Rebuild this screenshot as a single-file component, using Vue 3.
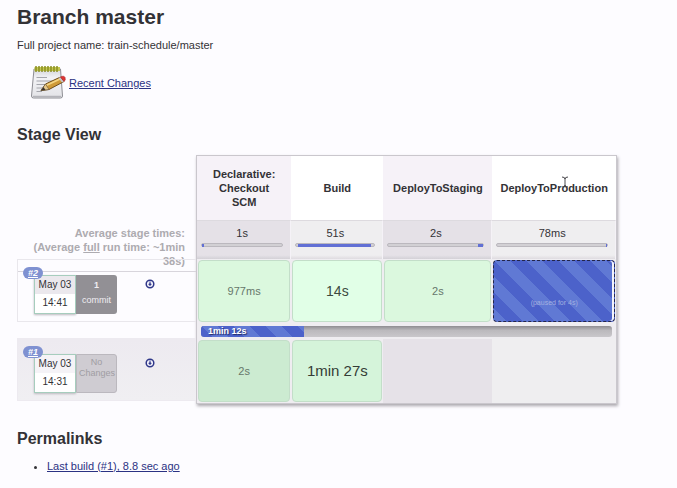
<script setup>
const stages = [
  { name: 'Declarative: Checkout SCM', average: '1s', start: 0, share: 3 },
  { name: 'Build', average: '51s', start: 2, share: 93 },
  { name: 'DeployToStaging', average: '2s', start: 94, share: 6 },
  { name: 'DeployToProduction', average: '78ms', start: 99, share: 1 },
]

const runs = [
  {
    id: 2,
    date: 'May 03',
    time: '14:41',
    changes: ['1', 'commit'],
    cells: [
      { text: '977ms', kind: 'ok' },
      { text: '14s', kind: 'ok mid' },
      { text: '2s', kind: 'ok' },
      { text: '(paused for 4s)', kind: 'paused' },
    ],
    progress: { text: '1min 12s', percent: 25 },
  },
  {
    id: 1,
    date: 'May 03',
    time: '14:31',
    changes: null,
    cells: [
      { text: '2s', kind: 'ok old' },
      { text: '1min 27s', kind: 'ok old long' },
      { text: '', kind: 'empty' },
      { text: '', kind: 'empty' },
    ],
    progress: null,
  },
]
</script>

<template>
  <main class="page">
    <h1>Branch master</h1>
    <p class="project">Full project name: train-schedule/master</p>

    <div class="recent">
      <svg class="notepad" viewBox="0 0 36 36" aria-hidden="true">
        <defs>
          <linearGradient id="paper" x1="0" y1="0" x2="0" y2="1">
            <stop offset="0" stop-color="#d3d4d9" />
            <stop offset="0.3" stop-color="#f2f2f5" />
            <stop offset="1" stop-color="#e3e3e7" />
          </linearGradient>
        </defs>
        <path d="M4 4H30.500L32.500 31Q32.500 33 30.500 33H3.500Q1.500 33 1.500 31Z" fill="url(#paper)" stroke="#8e8e94" />
        <path d="M3 31.500H31" stroke="#b4b4ba" stroke-width="1.500" />
        <path d="M6.500 12.500H17M6.500 16H22M6.500 19.500H16M6.500 23H12M6.500 26.500H12" stroke="#a4a5ac" />
        <path d="M4.500 2H30V6H4.500Z" fill="#c3c650" />
        <path d="M6 1V7M9 1V7M12 1V7M15 1V7M18 1V7M21 1V7M24 1V7M27 1V7" stroke="#8a8e22" stroke-width="1.500" />
        <path d="M11 25.500L15.500 19L30.500 12L34 16.500L19 24.500Z" fill="#cf9a38" stroke="#6f4e1c" />
        <path d="M16.500 20.300L30.500 13.700" stroke="#f4d583" stroke-width="1.800" />
        <path d="M11 25.500L15.500 19L19 24.500Z" fill="#e6c88b" stroke="#65543a" stroke-width="0.600" />
        <path d="M11 25.500L13.500 22L15.500 24.900Z" fill="#38332e" />
        <path d="M28.500 13L30.500 12L34 16.500L32 17.600Z" fill="#c6c7cc" />
        <path d="M30.500 12Q33.800 10.200 35 12.500Q36 14.800 34 16.500Z" fill="#e03432" stroke="#a62428" stroke-width="0.600" />
      </svg>
      <a href="#changes">Recent Changes</a>
    </div>

    <h2>Stage View</h2>
    <section class="stage-view">
      <div class="runs">
        <div class="averages">
          Average stage times:<br />
          (Average <u>full</u> run time: ~1min<br />
          38s)
        </div>
        <div v-for="run in runs" :key="run.id" class="run" :class="{ previous: run.id === 1 }">
          <a class="badge" :href="'#run-' + run.id">#{{ run.id }}</a>
          <div class="card">
            <div class="stamp">
              <span class="date">{{ run.date }}</span>
              <span class="time">{{ run.time }}</span>
            </div>
            <div class="changes" :class="{ none: !run.changes }">
              <template v-if="run.changes"><b>{{ run.changes[0] }}</b><span>{{ run.changes[1] }}</span></template>
              <span v-else>No Changes</span>
            </div>
          </div>
          <a class="download" :href="'#artifacts-' + run.id" aria-label="Artifacts">
            <svg viewBox="0 0 10 10" aria-hidden="true">
              <circle cx="5" cy="5" r="3.800" fill="#f4f3fb" stroke="#2f3789" stroke-width="1.500" />
              <path d="M5 2.500V6M3.800 5L5 6.600L6.200 5Z" fill="#2f3789" stroke="#2f3789" />
            </svg>
          </a>
        </div>
      </div>

      <table>
        <thead>
          <tr class="names">
            <th v-for="stage in stages" :key="stage.name" scope="col">{{ stage.name }}</th>
          </tr>
          <tr class="times">
            <td v-for="stage in stages" :key="stage.name">
              {{ stage.average }}
              <div class="meter">
                <div class="share" :style="{ marginLeft: stage.start + '%', width: stage.share + '%' }"></div>
              </div>
            </td>
          </tr>
        </thead>
        <tbody v-for="run in runs" :key="run.id">
          <tr class="results">
            <td v-for="(cell, i) in run.cells" :key="i">
              <div class="cell" :class="cell.kind">{{ cell.text }}</div>
            </td>
          </tr>
          <tr v-if="run.progress" class="progress-row">
            <td colspan="4">
              <div class="progress">
                <div class="done" :style="{ width: run.progress.percent + '%' }">{{ run.progress.text }}</div>
              </div>
            </td>
          </tr>
        </tbody>
      </table>

      <svg class="pointer" viewBox="0 0 8 12" aria-hidden="true">
        <path d="M1 1Q4 1 4 3Q4 1 7 1M4 2V10M1 11Q4 11 4 9Q4 11 7 11" fill="none" stroke="#4b4a4e" />
      </svg>
    </section>

    <h2>Permalinks</h2>
    <ul>
      <li><a href="#last-build">Last build (#1), 8.8 sec ago</a></li>
    </ul>
  </main>
</template>

<style>
body {
  background: #fdfcff;
}
</style>

<style scoped>
.page {
  padding: 5px 60px 12px 17px;
  font: 11px/14px "Liberation Sans", Arial, sans-serif;
  color: #333236;
}

a {
  color: #2b3283;
}

h1 {
  margin: 0;
  font-size: 21px;
  line-height: 24px;
}

h2 {
  margin: 0;
  font-size: 16px;
  line-height: 20px;
}

.project {
  margin: 9px 0 13px;
}

.recent {
  display: flex;
  align-items: center;
  gap: 3px;
  padding-left: 13px;
  margin-bottom: 24px;
}

.notepad {
  width: 36px;
  height: 36px;
}

.stage-view {
  position: relative;
  display: flex;
  margin: 10px 0 25px;
}

.runs {
  flex: 0 0 179px;
}

.averages {
  box-sizing: border-box;
  height: 104px;
  padding: 71px 11px 0 0;
  text-align: right;
  font-weight: bold;
  color: #adabb0;
}

.run {
  position: relative;
  box-sizing: border-box;
  display: flex;
  align-items: flex-start;
  height: 63px;
  padding: 15px 0 0 16px;
  border: 1px solid #e9e7ec;
  border-right: 0;
  background: linear-gradient(#d8d5dc, #d8d5dc) 0 11px / 100% 1px no-repeat;
}

.run.previous {
  margin-top: 16px;
  border-color: #edeaf0;
  background: linear-gradient(#edeaf0, #f0eff2);
}

.badge {
  position: absolute;
  top: 7px;
  left: 5px;
  width: 20px;
  border-radius: 6px;
  background: #7f91d1;
  color: #fff;
  font-size: 9px;
  line-height: 12px;
  font-weight: bold;
  font-style: italic;
  text-align: center;
}

.card {
  display: flex;
  height: 39px;
  font-size: 10px;
  text-align: center;
}

.stamp {
  box-sizing: border-box;
  width: 42px;
  display: flex;
  flex-direction: column;
  border: 1px solid #a6cdbd;
  background: #fff;
  line-height: 18px;
  box-shadow: 0 1px 2px #bcb9bf;
}

.date {
  background: #ebe8ed;
}

.previous .date {
  background: #f5f3f7;
}

.changes {
  box-sizing: border-box;
  width: 41px;
  display: flex;
  flex-direction: column;
  padding-top: 3px;
  border-radius: 0 3px 3px 0;
  background: #929095;
  color: #f0eef2;
  font-size: 9px;
  line-height: 15px;
}

.changes.none {
  padding: 2px;
  border: 1px solid #bbb8be;
  background: #cfccd2;
  color: #a09da3;
  line-height: 11px;
}

.download {
  display: flex;
  padding: 4px 0 0 28px;
}

.download svg {
  width: 10px;
  height: 10px;
}

table {
  flex: 1;
  table-layout: fixed;
  border-collapse: separate;
  border-spacing: 0;
  border: 1px solid #cac7cd;
  background: #efedf1;
  box-shadow: 1px 2px 3px #aaa7ad;
}

th,
td {
  box-sizing: border-box;
  padding: 0;
  text-align: center;
}

th:nth-child(1) {
  width: 22.5%;
}

th:nth-child(2) {
  width: 22%;
}

th:nth-child(3) {
  width: 26%;
}

.names th {
  height: 64px;
  padding: 0 11px;
  background: #fff;
}

.names th:nth-child(odd) {
  background: #f6f2f8;
}

.names th:nth-child(n + 3) {
  padding: 0;
}

.times td {
  height: 39px;
  padding: 5px 7px 0 4px;
  vertical-align: top;
  border-top: 1px solid #dddadf;
  border-right: 1px solid #f5f2f7;
  background: linear-gradient(#efeef0 90%, #dedbe0);
}

.times td:nth-child(odd) {
  background: linear-gradient(#e5e1e7 90%, #d3d0d6);
}

.meter {
  box-sizing: border-box;
  height: 4px;
  margin-top: 3px;
  border: 1px solid #bbb8be;
  border-radius: 2px;
  background: #d2d0d4;
}

.share {
  height: 3px;
  background: #6270d5;
}

.results td {
  height: 64px;
  padding: 1px;
}

.cell {
  box-sizing: border-box;
  height: 62px;
  line-height: 60px;
  border: 1px solid #c3dec9;
  border-radius: 4px;
  color: #66776b;
}

.ok {
  background: #dbf8de;
}

.ok.mid {
  background: #e1ffe7;
  color: #3c4a40;
  font-size: 14px;
}

.ok.old {
  background: #ccebd1;
}

.ok.old.long {
  background: #d5f4da;
  color: #343c36;
  font-size: 15px;
}

.empty {
  border-color: transparent;
}

.results td:nth-child(3):has(.empty) {
  background: #e6e2e8;
}

.results td:nth-child(4):has(.empty) {
  background: #efeef0;
}

.paused,
.done {
  background-color: #4c62ca;
  background-image: linear-gradient(45deg, #6079d4 25%, transparent 25%, transparent 50%, #6079d4 50%, #6079d4 75%, transparent 75%);
  background-size: 32px 32px;
}

.paused {
  padding-top: 12px;
  border: 1px dashed #24264a;
  color: #a3b0e0;
  font-size: 7px;
  box-shadow: inset -2px 0 #f3f3fb;
}

.progress-row td {
  height: 16px;
  padding: 3px 4px 2px;
}

.progress {
  height: 11px;
  border-radius: 3px;
  overflow: hidden;
  background: linear-gradient(#8f8d92, #bbb9bd 40%, #c9c7cb);
}

.done {
  box-sizing: border-box;
  height: 11px;
  padding-left: 7px;
  color: #fff;
  font-size: 9px;
  line-height: 11px;
  font-weight: bold;
  text-align: left;
  text-shadow: 1px 1px 1px #222b66;
}

.pointer {
  position: absolute;
  top: 21px;
  right: 48px;
  width: 8px;
  height: 12px;
}

ul {
  margin: 10px 0 0;
  padding-left: 30px;
}
</style>
